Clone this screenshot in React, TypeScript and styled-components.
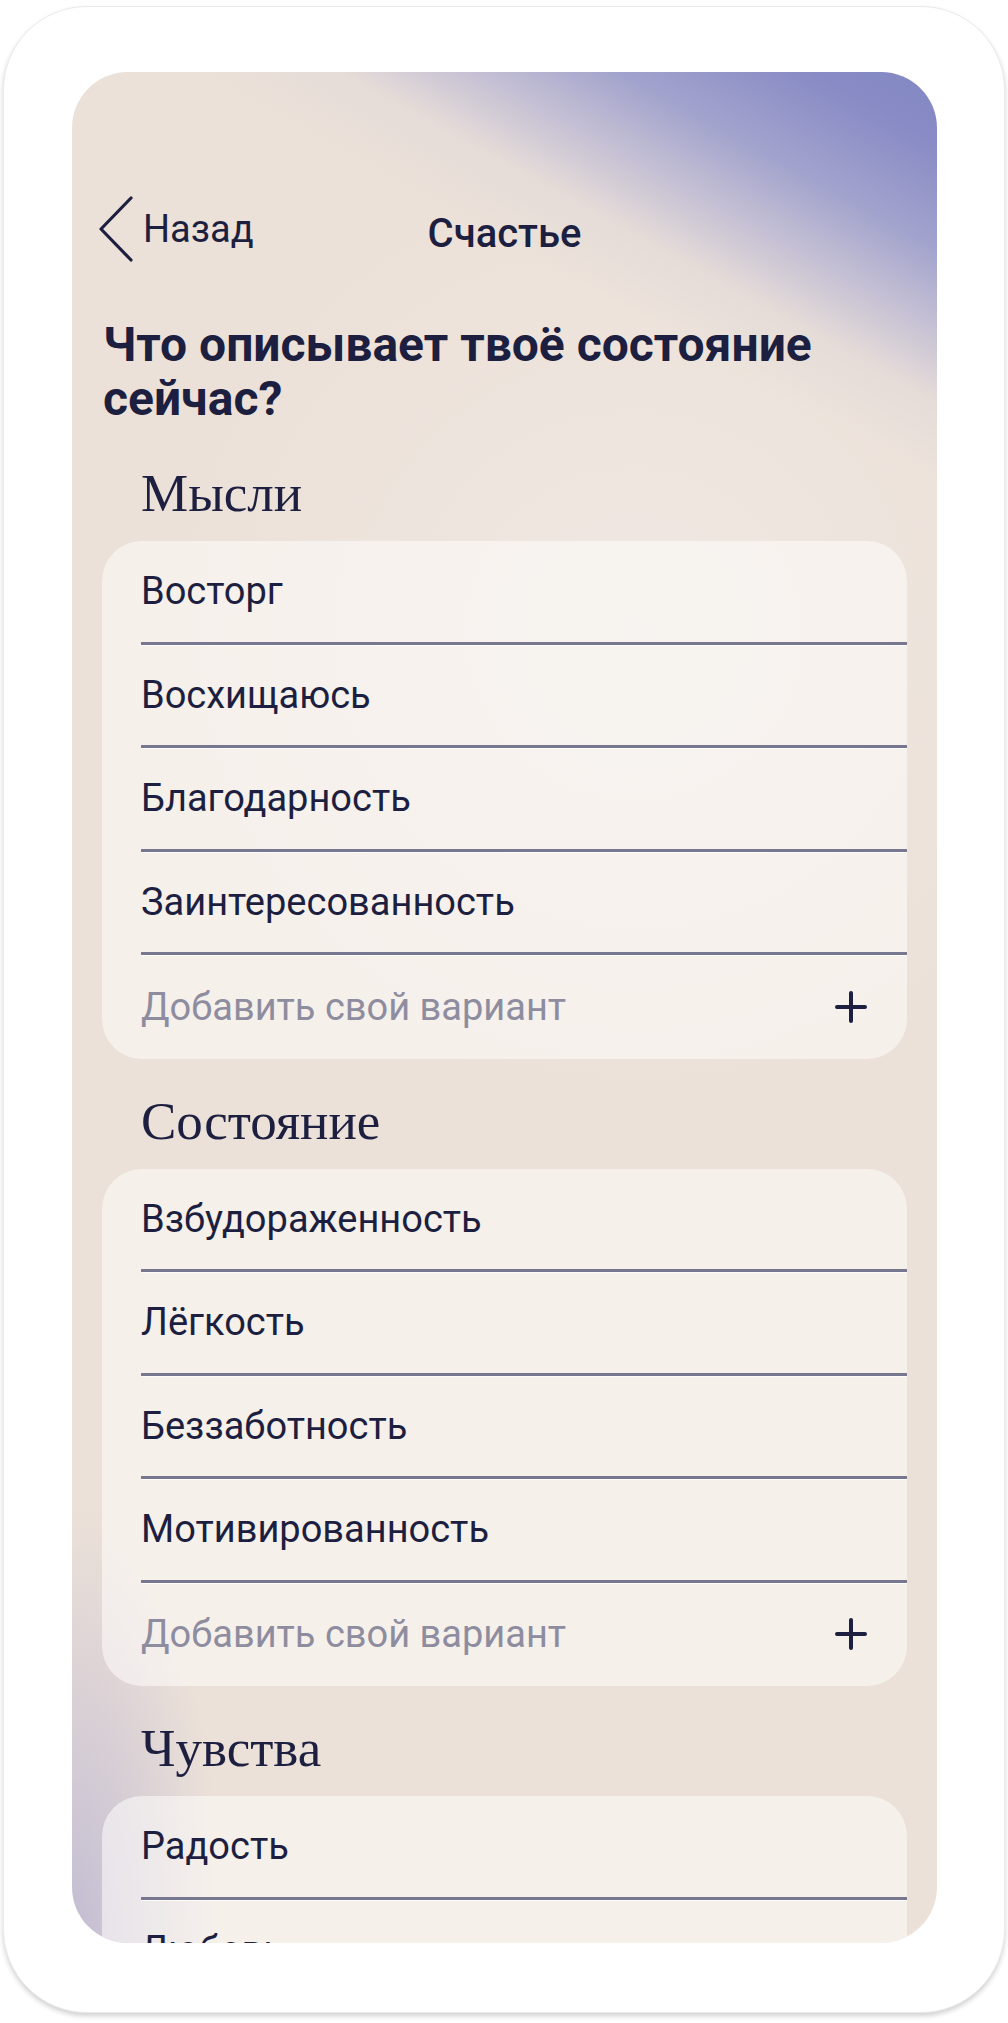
import React from "react";
import styled, { createGlobalStyle } from "styled-components";

const GlobalStyle = createGlobalStyle`
  html, body {
    margin: 0;
    padding: 0;
    background: #ffffff;
  }
  body {
    font-family: Roboto, "Noto Sans", "Liberation Sans", sans-serif;
    color: #1d1f40;
  }
  * { box-sizing: border-box; }
`;

const Page = styled.div`
  width: 1008px;
  height: 2023px;
  padding: 6px 3px 10px 3px;
`;

const Frame = styled.div`
  width: 100%;
  height: 100%;
  background: #ffffff;
  border: 1px solid #ebebee;
  border-radius: 84px;
  box-shadow: 0 3px 5px rgba(0, 0, 0, 0.18);
  padding: 65px 67px 69px 68px;
`;

const Screen = styled.div`
  width: 100%;
  height: 100%;
  border-radius: 56px;
  overflow: hidden;
  display: flex;
  flex-direction: column;
  padding: 0 30px;
  background:
    radial-gradient(ellipse 150px 440px at 0% 100%, rgba(192, 186, 210, 0.95), rgba(192, 186, 210, 0) 100%),
    linear-gradient(209deg, #8387c3 0%, #888bc5 3%, #a2a3cd 7.5%, #c6c1d4 11%, rgba(228, 219, 216, 0.9) 14%, rgba(236, 225, 217, 0) 17.5%),
    radial-gradient(ellipse 55% 25% at 65% 30%, rgba(240, 234, 230, 0.7), rgba(240, 234, 230, 0) 100%),
    #ece1d8;
`;

const NavBar = styled.div`
  display: grid;
  grid-template-columns: 1fr auto 1fr;
  align-items: center;
  height: 100px;
  margin-top: 124px;
`;

const BackButton = styled.button`
  display: flex;
  align-items: center;
  gap: 9px;
  margin-left: -4px;
  padding: 0;
  border: none;
  background: none;
  color: #1d1f40;
  font-family: inherit;
  font-size: 38px;
  font-weight: 400;
  cursor: pointer;
  justify-self: start;
`;

const Title = styled.div`
  font-size: 40px;
  font-weight: 500;
  color: #1d1f40;
  padding-top: 8px;
`;

const Question = styled.h1`
  margin: 56px 0 0 1px;
  font-size: 48px;
  line-height: 54px;
  font-weight: 700;
  color: #1d1f40;
`;

const SectionTitle = styled.h2`
  margin: 0;
  padding-left: 39px;
  font-family: "Liberation Serif", "DejaVu Serif", serif;
  font-weight: 400;
  font-size: 53px;
  line-height: 60px;
  color: #1d1f40;
`;

const Section = styled.section<{ $first?: boolean }>`
  display: flex;
  flex-direction: column;
  gap: 18px;
  margin-top: ${(p) => (p.$first ? "37px" : "32px")};
`;

const Card = styled.ul`
  margin: 0;
  padding: 0;
  list-style: none;
  border-radius: 40px;
  background: rgba(255, 253, 251, 0.55);
  overflow: hidden;
  flex-shrink: 0;
`;

const Row = styled.li<{ $last?: boolean }>`
  display: flex;
  align-items: center;
  justify-content: space-between;
  height: 103.5px;
  margin-left: 39px;
  padding-right: 40px;
  font-size: 38px;
  color: ${(p) => (p.$last ? "#8e8d9f" : "#1d1f40")};
  border-bottom: ${(p) => (p.$last ? "none" : "3px solid #77788f")};
  box-shadow: ${(p) => (p.$last ? "none" : "0 1px 0 rgba(255,255,255,0.8)")};
`;

const PlusIcon = () => (
  <svg width="32" height="32" viewBox="0 0 32 32" aria-hidden="true">
    <path d="M16 2v28M2 16h28" stroke="#1d1f40" strokeWidth="4" strokeLinecap="round" />
  </svg>
);

const Chevron = () => (
  <svg width="36" height="66" viewBox="0 0 36 66" aria-hidden="true">
    <path d="M33 2L3 33l30 31" fill="none" stroke="#1d1f40" strokeWidth="3.2" strokeLinecap="round" strokeLinejoin="round" />
  </svg>
);

const sections = [
  { title: "Мысли", items: ["Восторг", "Восхищаюсь", "Благодарность", "Заинтересованность"], add: true },
  { title: "Состояние", items: ["Взбудораженность", "Лёгкость", "Беззаботность", "Мотивированность"], add: true },
  { title: "Чувства", items: ["Радость", "Любовь", "Нежность", "Вдохновение"], add: true },
];

export default function App() {
  return (
    <Page>
      <GlobalStyle />
      <Frame>
        <Screen>
          <NavBar>
            <BackButton>
              <Chevron />
              Назад
            </BackButton>
            <Title>Счастье</Title>
            <span />
          </NavBar>
          <Question>Что описывает твоё состояние сейчас?</Question>
          {sections.map((s, i) => (
            <Section key={s.title} $first={i === 0}>
              <SectionTitle>{s.title}</SectionTitle>
              <Card>
                {s.items.map((it) => (
                  <Row key={it}>{it}</Row>
                ))}
                {s.add && (
                  <Row $last>
                    Добавить свой вариант
                    <PlusIcon />
                  </Row>
                )}
              </Card>
            </Section>
          ))}
        </Screen>
      </Frame>
    </Page>
  );
}
